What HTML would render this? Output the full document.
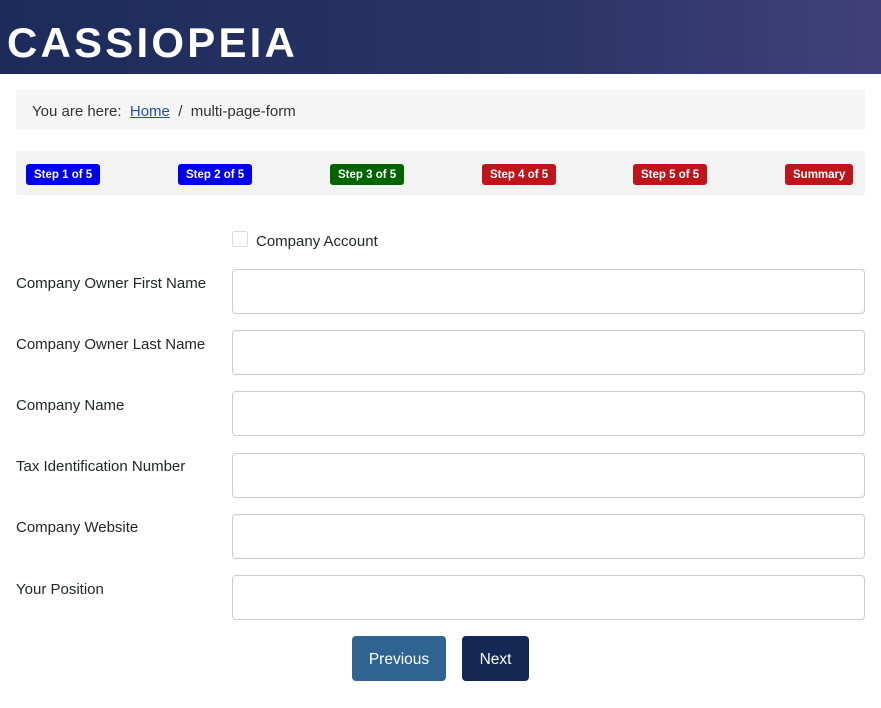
<!DOCTYPE html>
<html><head><style>
body{margin:0;width:881px;height:708px;overflow:hidden;font-family:"Liberation Sans",sans-serif;color:#22262a;background:#fff}
.hdr{height:74px;background:linear-gradient(90deg,#1c2b5a,#2a3466 60%,#41407a);position:relative}
.hdr span{position:absolute;left:7px;top:19px;color:#fff;font-weight:bold;font-size:42px;letter-spacing:3.2px;line-height:48px}
.bc{position:absolute;left:16px;top:90px;width:849px;height:40px;background:#f5f5f5;font-size:15px;line-height:43px;box-sizing:border-box;padding-left:16px;color:#333}
.bc a{color:#224faa;text-decoration:underline}
.steps{position:absolute;left:16px;top:151px;width:849px;height:44px;background:#f3f3f3;border-radius:3px}
.b{position:absolute;top:13px;height:21px;line-height:23px;font-size:11.5px;font-weight:bold;color:#fff;padding:0 8px;border-radius:3px}
.lbl{position:absolute;left:16px;font-size:15px}
.inp{position:absolute;left:232px;width:633px;height:45px;border:1px solid #ccc;border-radius:4px;box-sizing:border-box}
.btn{position:absolute;top:636px;height:45px;line-height:47px;color:#fff;font-size:15.5px;border-radius:4px;text-align:center}
</style></head><body>
<div class="hdr"><span>CASSIOPEIA</span></div>
<div class="bc">You are here:&nbsp; <a>Home</a>&nbsp; / &nbsp;multi-page-form</div>
<div class="steps">
<div class="b" style="left:10px;background:#0000ee">Step 1 of 5</div>
<div class="b" style="left:162px;background:#0000ee">Step 2 of 5</div>
<div class="b" style="left:314px;background:#006400">Step 3 of 5</div>
<div class="b" style="left:466px;background:#c0141c">Step 4 of 5</div>
<div class="b" style="left:617px;background:#c0141c">Step 5 of 5</div>
<div class="b" style="left:769px;background:#c0141c">Summary</div>
</div>
<div style="position:absolute;left:232px;top:231px;width:14px;height:14px;border:1px solid #ddd;border-radius:3px"></div>
<div class="lbl" style="left:256px;top:233px">Company Account</div>
<div class="lbl" style="top:275px">Company Owner First Name</div><div class="inp" style="top:269px"></div>
<div class="lbl" style="top:336px">Company Owner Last Name</div><div class="inp" style="top:330px"></div>
<div class="lbl" style="top:397px">Company Name</div><div class="inp" style="top:391px"></div>
<div class="lbl" style="top:458px">Tax Identification Number</div><div class="inp" style="top:453px"></div>
<div class="lbl" style="top:519px">Company Website</div><div class="inp" style="top:514px"></div>
<div class="lbl" style="top:581px">Your Position</div><div class="inp" style="top:575px"></div>
<div class="btn" style="left:352px;width:94px;background:#2f6390">Previous</div>
<div class="btn" style="left:462px;width:67px;background:#132852">Next</div>
</body></html>
